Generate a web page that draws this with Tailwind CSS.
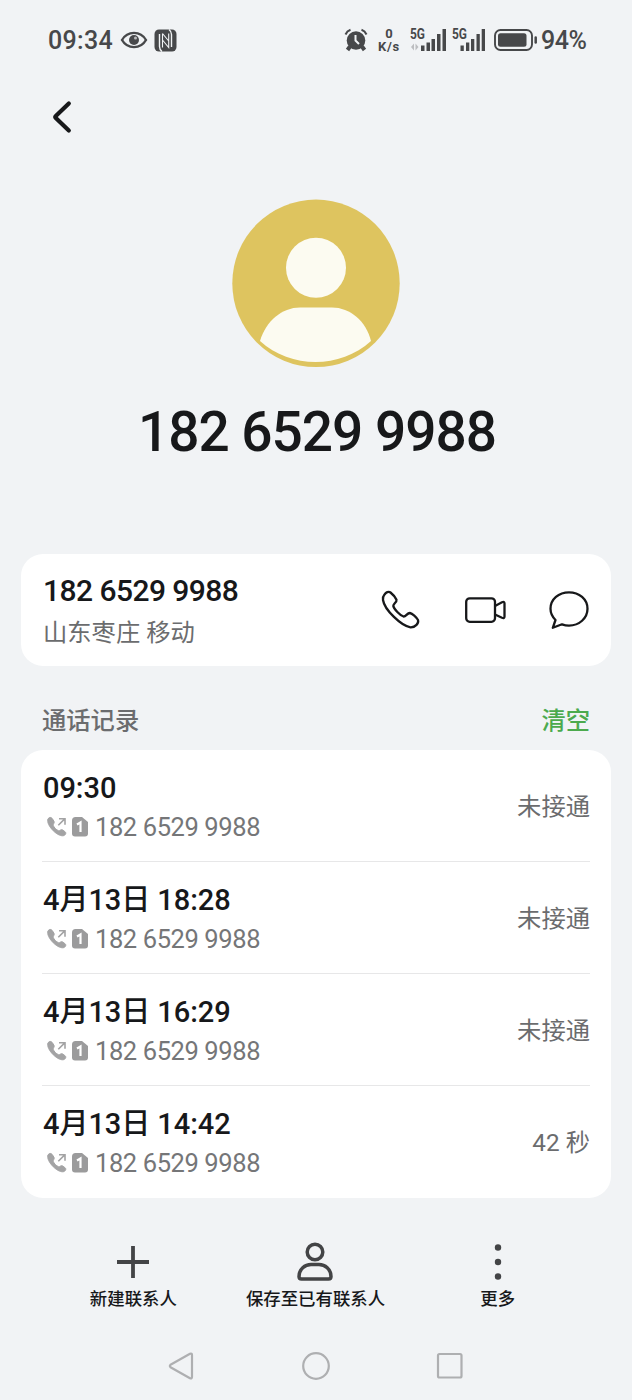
<!DOCTYPE html>
<html lang="zh-CN">
<head>
    <meta charset="UTF-8">
    <meta name="viewport" content="width=device-width, initial-scale=1.0">
    <title>通话详情</title>
    <script src="https://cdn.jsdelivr.net/npm/@tailwindcss/browser@4"></script>
    <style>
        body {
            font-family: Roboto, 'Noto Sans CJK SC', sans-serif;
        }
    </style>
</head>
<body class="bg-[#f1f3f5] text-[#17181a]">
    <div class="w-[632px] h-[1400px] flex flex-col overflow-hidden">

        <!-- Status bar -->
        <div class="h-20 shrink-0 pl-12 pr-[44px] flex items-center justify-between text-[#47484a]">
            <div class="flex items-center">
                <span class="w-[66px] pt-[2px] text-[25px] leading-8 font-medium whitespace-nowrap tracking-[0.3px]">09:34</span>
                <svg class="ml-[6px]" width="28" height="20" viewBox="0 0 28 20" fill="none">
                    <path d="M2 10C7.500 0.500 20.500 0.500 26 10C20.500 19.500 7.500 19.500 2 10Z" stroke="currentColor" stroke-width="2.400"/>
                    <circle cx="14" cy="10" r="5" fill="currentColor"/>
                    <circle cx="15.500" cy="8" r="1.500" fill="#b9babc"/>
                </svg>
                <svg class="ml-[6px]" width="23" height="23" viewBox="0 0 23 23" fill="none">
                    <rect x="0.500" y="0.500" width="22" height="22" rx="4.500" fill="currentColor"/>
                    <path d="M5.500 5V17.500Q5.500 20.500 8 22.500M17.500 18V5.500Q17.500 2.500 15 0.500" stroke="#f1f3f5" stroke-width="1.400"/>
                    <path d="M8.500 4.500V18.500M8.500 4.500L14.700 12M8.500 11L14.700 18.500V4.500" stroke="#f1f3f5" stroke-width="1.100"/>
                </svg>
            </div>
            <div class="flex items-center">
                <svg width="24" height="24" viewBox="0 0 24 24" fill="none">
                    <circle cx="12" cy="12.500" r="9.300" fill="currentColor"/>
                    <path d="M1.500 6.500Q3 3 6.500 1.800M22.500 6.500Q21 3 17.500 1.800" stroke="currentColor" stroke-width="2"/>
                    <path d="M6 18.500L3.500 22M18 18.500L20.500 22" stroke="currentColor" stroke-width="4"/>
                    <path d="M11.500 7V12.500L15 16" stroke="#f1f3f5" stroke-width="2"/>
                </svg>
                <div class="ml-[9px] w-[24px] flex flex-col items-center font-bold text-[13px] leading-[13px]">
                    <span>0</span>
                    <span class="tracking-[0.8px]">K/s</span>
                </div>
                <svg class="ml-[9px] overflow-visible" width="37" height="24" viewBox="0 0 37 24">
                    <text x="0" y="11" font-size="14" font-weight="700" textLength="15" lengthAdjust="spacingAndGlyphs" fill="currentColor">5G</text>
                    <path d="M1 19L4 15.500V22.500ZM8.500 19L5.500 15.500V22.500Z" fill="#bcbdc0"/>
                    <path d="M11 17.500h3.500V23H11ZM16.500 14.500h3.500V23h-3.500ZM21.500 11h3.500V23h-3.500ZM27 6h3.500V23H27ZM32.500 1H36V23h-3.500Z" fill="currentColor"/>
                </svg>
                <svg class="ml-[5px] overflow-visible" width="34" height="24" viewBox="0 0 34 24">
                    <text x="0" y="11" font-size="14" font-weight="700" textLength="15" lengthAdjust="spacingAndGlyphs" fill="currentColor">5G</text>
                    <path d="M8.500 17.500h3.300V23H8.500ZM14 14.500h3.300V23H14ZM19 11h3.300V23H19ZM24.500 6h3.300V23h-3.300ZM29.700 1H33V23h-3.300Z" fill="currentColor"/>
                </svg>
                <svg class="ml-[7px]" width="45" height="24" viewBox="0 0 45 24" fill="none">
                    <rect x="2" y="2" width="37" height="20" rx="5.500" stroke="currentColor" stroke-width="1.900"/>
                    <rect x="5" y="5.200" width="28.500" height="13.600" rx="2.500" fill="currentColor"/>
                    <path d="M42.700 9.500V14.500" stroke="currentColor" stroke-width="2.500" stroke-linecap="round"/>
                </svg>
                <span class="ml-[3px] w-[47px] pt-[2px] text-[25px] leading-8 font-medium whitespace-nowrap tracking-[-0.5px]">94%</span>
            </div>
        </div>

        <!-- Back -->
        <div class="h-[74px] shrink-0 pl-[50px] flex items-center">
            <svg width="24" height="34" viewBox="0 0 24 34" fill="none">
                <path d="M18.800 3.500L5.800 16Q4.800 17 5.800 18L18.800 30.500" stroke="#17181a" stroke-width="4.200" stroke-linecap="round"/>
            </svg>
        </div>

        <!-- Avatar and number -->
        <div class="h-[400px] shrink-0 pt-[45px] flex flex-col items-center">
            <svg class="shrink-0" width="168" height="168" viewBox="0 0 168 168">
                <circle cx="84" cy="84.300" r="83.700" fill="#dec45f"/>
                <circle cx="84" cy="68.800" r="30" fill="#fcfbf1"/>
                <path d="M28 142C34 122 50 108.500 68 108.500H100C118 108.500 134 122 139 142C108 170 59 170 28 142Z" fill="#fcfbf1"/>
            </svg>
            <h1 class="mt-[33px] ml-[2px] text-[55px] leading-[64px] font-medium whitespace-nowrap tracking-[-1px]">182 6529 9988</h1>
        </div>

        <!-- Number card -->
        <div class="mx-[21px] h-[112px] shrink-0 pl-[22px] pr-[21px] rounded-[22px] bg-white flex items-center justify-between">
            <div class="pt-[4px] flex flex-col">
                <span class="text-[30px] leading-[41px] font-medium whitespace-nowrap tracking-[-0.55px]">182 6529 9988</span>
                <span class="pt-px text-[24.300px] leading-[42px] text-[#6b6c6e] whitespace-nowrap">山东枣庄 移动</span>
            </div>
            <div class="flex items-center gap-[42px]">
                <svg width="42" height="42" viewBox="0 0 42 42" fill="none" stroke="#17181a" stroke-width="2.300" stroke-linejoin="round">
                    <path d="M4.500 5.500C6 3.500 8.500 2 10.500 3.500C13 5.500 15.500 8.300 16.500 10.800C17 13.300 13.300 14.500 13.300 17C14 20 20 26.500 23.500 27.500C26 27.800 27 24 29.800 24C32.500 24.500 36.300 28 38 31C39 34 35.500 38.500 30.500 38.300C21.500 37 4.500 21 3 11C2.600 9 3.200 7 4.500 5.500Z"/>
                </svg>
                <svg width="42" height="42" viewBox="0 0 42 42" fill="none" stroke="#17181a" stroke-width="2.300" stroke-linejoin="round">
                    <rect x="2.200" y="9.300" width="28.800" height="23.500" rx="3.500"/>
                    <path d="M31 17L38 13.300Q40.500 12.300 40.500 14.500V27.500Q40.500 29.800 38 28.800L31 25.500"/>
                </svg>
                <svg width="42" height="42" viewBox="0 0 42 42" fill="none" stroke="#17181a" stroke-width="2.300" stroke-linejoin="round">
                    <path d="M4.800 38.800L7.500 31C4.500 28 2.500 24 2.500 19.800C2.500 10.300 10.800 3.300 21 3.300S39.500 10.300 39.500 19.800S31.200 36.600 21 36.600C18.500 36.600 16.200 36.100 14 35.300Z"/>
                </svg>
            </div>
        </div>

        <!-- Section title -->
        <div class="h-[84px] shrink-0 pt-[25px] px-[42px] flex justify-between text-[24.300px] leading-[60px] font-medium">
            <span class="text-[#6b6c6e]">通话记录</span>
            <span class="text-[#4caa4e]">清空</span>
        </div>

        <!-- Call log -->
        <div id="calls" class="mx-[21px] h-[448px] shrink-0 px-[21px] rounded-[22px] bg-white divide-y divide-[#e7e7e8]"></div>

        <!-- Bottom actions -->
        <div class="mx-[42px] h-[134px] shrink-0 pt-[42px] grid grid-cols-3 text-[17.4px] leading-[30px] font-medium whitespace-nowrap">
            <div class="flex flex-col items-center">
                <svg width="44" height="44" viewBox="0 0 44 44" stroke="#434446" stroke-width="3.800">
                    <path d="M6 22H38M22 6V38"/>
                </svg>
                <span>新建联系人</span>
            </div>
            <div class="mr-px flex flex-col items-center">
                <svg width="44" height="44" viewBox="0 0 44 44" fill="none" stroke="#434446" stroke-width="3.500">
                    <circle cx="22" cy="12" r="7.800"/>
                    <path d="M6 36.500C6 29 12 24.500 18 24.500H26C32 24.500 38 29 38 36.500Q38 39 35.500 39H8.500Q6 39 6 36.500Z"/>
                </svg>
                <span>保存至已有联系人</span>
            </div>
            <div class="mr-[2px] flex flex-col items-center">
                <svg width="44" height="44" viewBox="0 0 44 44" fill="#434446">
                    <circle cx="22" cy="7.500" r="3.200"/>
                    <circle cx="22" cy="22" r="3.200"/>
                    <circle cx="22" cy="36.500" r="3.200"/>
                </svg>
                <span>更多</span>
            </div>
        </div>

        <!-- System navigation -->
        <div class="h-[68px] shrink-0 flex justify-center gap-[104px]">
            <svg class="mt-[19px]" width="30" height="30" viewBox="0 0 30 30" fill="none" stroke="#aeafb1" stroke-width="2.200" stroke-linejoin="round">
                <path d="M3.500 16.200Q2.200 15 3.500 13.800L23 2.800Q25 2 25 4V26Q25 28 23 27.200Z"/>
            </svg>
            <svg class="mt-[19px]" width="30" height="30" viewBox="0 0 30 30" fill="none" stroke="#aeafb1" stroke-width="2.200">
                <circle cx="15" cy="15" r="12.800"/>
            </svg>
            <svg class="mt-[19px]" width="30" height="30" viewBox="0 0 30 30" fill="none" stroke="#aeafb1" stroke-width="2.200">
                <rect x="3" y="3" width="23.500" height="23.500" rx="1.500"/>
            </svg>
        </div>
    </div>

    <script>
        const calls = [
            { time: '09:30', status: '未接通' },
            { time: '4月13日 18:28', status: '未接通' },
            { time: '4月13日 16:29', status: '未接通' },
            { time: '4月13日 14:42', status: '42 秒' },
        ];

        // One row per call: time, outgoing icon, SIM slot and number
        document.getElementById('calls').innerHTML = calls.map(call => `
            <div class="h-[112px] pt-[2px] flex items-center justify-between">
                <div class="pl-px flex flex-col">
                    <span class="text-[29px] leading-[40px] font-medium whitespace-nowrap tracking-[-0.05px]">${call.time}</span>
                    <div class="pl-[3px] flex items-center">
                        <svg width="22" height="22" viewBox="0 0 22 22" fill="none">
                            <path d="M2 2.800C3.500 1 5 1 6.300 2.600L8 5.300C8.800 7 7 8 7.200 9.300C8 11.500 10.300 13.800 12.500 14.700C14 15 14.500 13.200 16.300 13.800L18.800 15.500C20.300 16.700 20 18 18.500 19.300C13 22.500 -0.500 9.500 2 2.800Z" fill="#a3a3a4" stroke="#a3a3a4"/>
                            <path d="M12.300 9.300L18.500 3.100M13 2.700H19V8.700" stroke="#a3a3a4" stroke-width="1.600"/>
                        </svg>
                        <svg class="ml-[3px]" width="18" height="22" viewBox="0 0 18 22">
                            <path d="M4.500 1H11L17 6V17.500Q17 20.500 14 20.500H4Q1 20.500 1 17.500V4.500Q1 1 4.500 1Z" fill="#9b9b9c"/>
                            <path d="M6 8.500L9.500 6.500V16" fill="none" stroke="#fff" stroke-width="2.200"/>
                        </svg>
                        <span class="ml-[6px] text-[25.5px] leading-[38px] text-[#757678] whitespace-nowrap tracking-[-0.4px]">182 6529 9988</span>
                    </div>
                </div>
                <span class="text-[24.3px] leading-[40px] text-[#6b6c6e] whitespace-nowrap">${call.status}</span>
            </div>
        `).join('');
    </script>
</body>
</html>
